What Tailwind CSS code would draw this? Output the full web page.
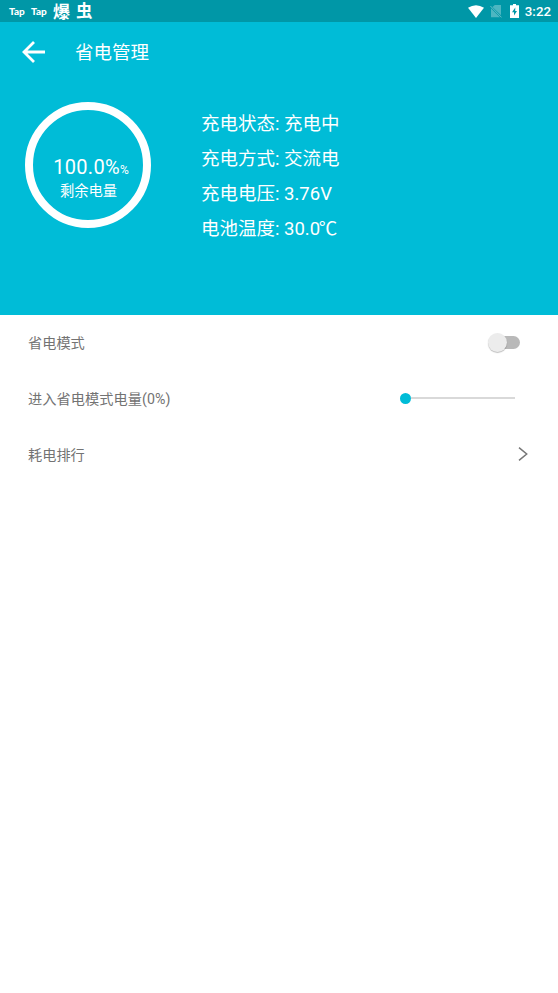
<!DOCTYPE html>
<html lang="zh-CN">
<head>
<meta charset="utf-8">
<title>省电管理</title>
<script src="https://cdn.jsdelivr.net/npm/@tailwindcss/browser@4"></script>
</head>
<body class="bg-white w-[558px] h-[993px] overflow-hidden font-[Roboto,'Noto_Sans_CJK_SC',sans-serif]">
<div class="h-[22px] bg-[#0097a7] flex items-center justify-between pl-[9px] pr-[7px] text-white">
  <div class="flex items-center h-full">
    <span class="w-[22px] text-[10px] leading-none font-black font-[Lato,sans-serif]">Tap</span>
    <span class="w-[22px] text-[10px] leading-none font-black font-[Lato,sans-serif]">Tap</span>
    <span class="w-[23px] text-[17px] leading-[22px] pt-px font-bold">爆</span>
    <span class="text-[16.5px] leading-[22px] pt-px font-bold">虫</span>
  </div>
  <div class="flex items-center h-full">
    <svg class="mr-[6px]" width="16" height="13" viewBox="0 0 16 13"><path d="M0 2.8Q8-2.5 16 2.8L8 13Z" fill="#fff"/></svg>
    <svg class="mr-[8px]" width="12" height="13" viewBox="0 0 12 13"><path d="M4.8 0H11V10.2L2.5 1.9ZM1 3.3L10 12.2H1Z" fill="#fff" fill-opacity=".3"/><path d="M.4 1L11.5 12.4" stroke="#fff" stroke-opacity=".4"/></svg>
    <svg class="mr-[6px]" width="9" height="14" viewBox="0 0 9 14"><path d="M3 0h3v1.3h3V14H0V1.3h3Z" fill="#fff"/><path d="M5.3 3.4L2 8.2h2v3.4L7 6.9H5.2Z" fill="#0097a7"/></svg>
    <span class="text-[13.3px] leading-[22px] pt-px font-medium">3:22</span>
  </div>
</div>
<header class="h-[60px] bg-[#00bcd7] flex items-center pl-[22px] text-white">
  <svg class="mr-[30px]" width="23" height="22" viewBox="0 0 23 22" fill="none" stroke="#fff" stroke-width="2.8"><path d="M12 1L2 11L12 21M2 11H23"/></svg>
  <h1 class="text-[18.5px] leading-6 pt-[2px] font-normal">省电管理</h1>
</header>
<section class="h-[233px] bg-[#00bcd7] flex items-start pl-[25px] text-white">
  <div class="mt-[20px] mr-[50px] size-[126px] rounded-full border-[8px] border-white flex flex-col items-center pt-[45px]">
    <div class="flex items-baseline leading-[24px] text-[20px] tracking-[0.3px] ml-[6px]">100.0%<span class="text-[12px] tracking-normal">%</span></div>
    <div class="text-[14.3px] leading-[21px] -mt-[1px] ml-px">剩余电量</div>
  </div>
  <div class="mt-[24.5px] text-[18.5px] leading-[35px] whitespace-nowrap">
    <p>充电状态: 充电中</p>
    <p>充电方式: 交流电</p>
    <p>充电电压: 3.76V</p>
    <p>电池温度: 30.0<span class="-ml-[1.5px]">℃</span></p>
  </div>
</section>
<main class="text-[14.2px] text-[#737373]">
  <div class="h-14 pl-7 pr-[38px] flex items-center justify-between">
    <span class="pt-[2px]">省电模式</span>
    <div class="relative w-[31px] h-[13px] mb-[2px] rounded-full bg-[#b9b9b9]">
      <div class="absolute -left-px -top-[3px] size-[19px] rounded-full bg-[#ececec] shadow-[0_1px_1px_rgba(0,0,0,.25)]"></div>
    </div>
  </div>
  <div class="h-14 pl-7 pr-[43px] flex items-center justify-between">
    <span class="pt-[2px] tracking-[0.06px]">进入省电模式电量(0%)</span>
    <div class="flex items-center w-[115px] mb-[2px]">
      <div class="size-[11px] rounded-full bg-[#00bcd7]"></div>
      <div class="h-[2px] flex-1 bg-[#d9d9d9]"></div>
    </div>
  </div>
  <div class="h-14 pl-7 pr-[30px] flex items-center justify-between">
    <span class="pt-[2px]">耗电排行</span>
    <svg class="mb-[2px]" width="10" height="14" viewBox="0 0 10 14" fill="none" stroke="#777" stroke-width="1.5"><path d="M1 .7L8.7 7L1 13.3"/></svg>
  </div>
</main>
</body>
</html>
